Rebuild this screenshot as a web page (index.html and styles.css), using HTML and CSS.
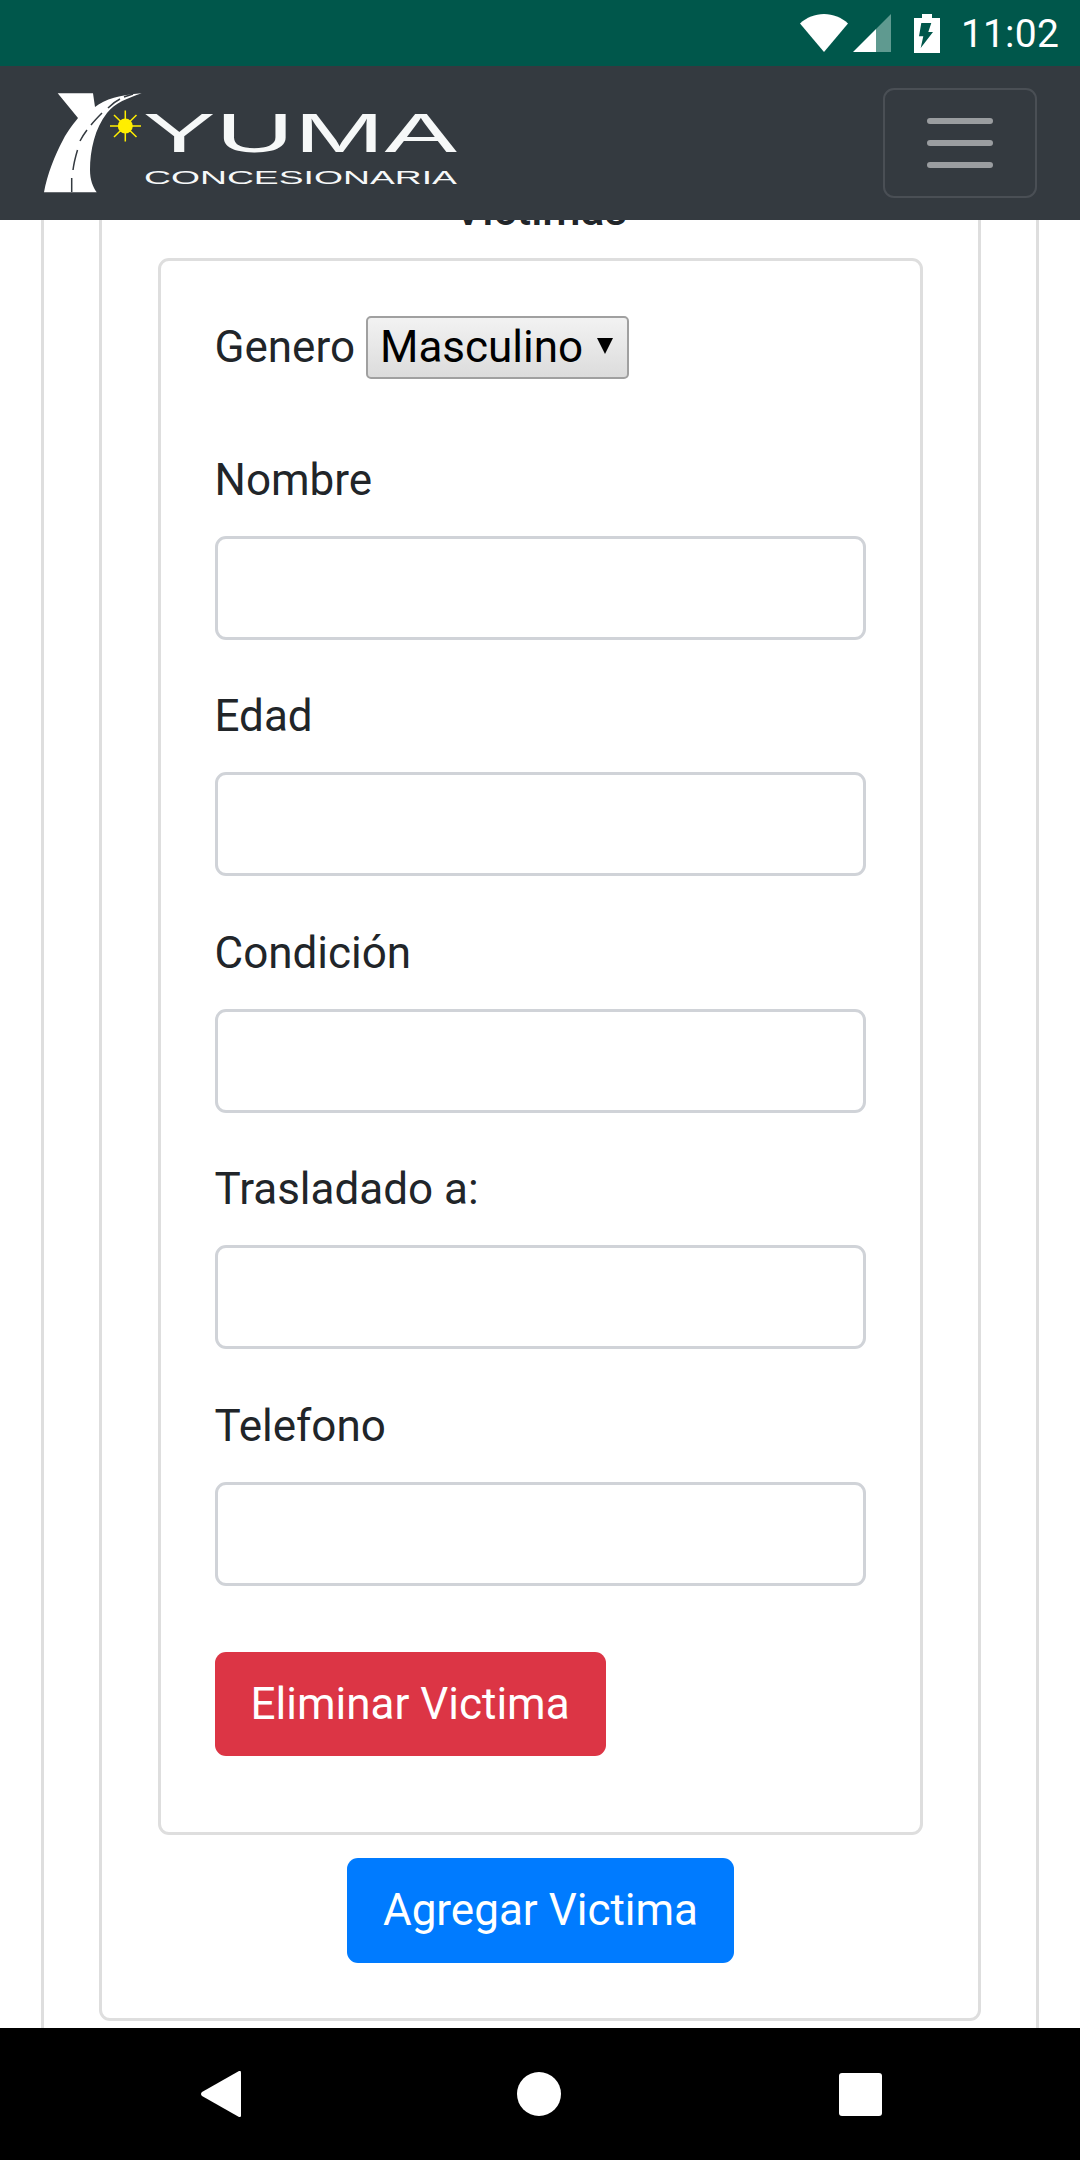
FILE: index.html
```html
<!DOCTYPE html>
<html lang="es">
<head>
<meta charset="utf-8">
<title>Yuma Concesionaria</title>
<link rel="stylesheet" href="styles.css">
</head>
<body>
<div class="screen">
  <div class="statusbar">
    <svg class="ic-wifi" viewBox="0 0 48 38"><path d="M0 9.500C6.500 3.500 15 0 24 0s17.500 3.500 24 9.500L24 38z"/></svg>
    <svg class="ic-signal" viewBox="0 0 38 38"><path class="dim" d="M23 15 38 0v38H23z"/><path d="M0 38 23 15v23z"/></svg>
    <svg class="ic-battery" viewBox="0 0 26 39"><path fill-rule="evenodd" d="M8 0h10v4h8v35H0V4h8zM7.300 9 5 22.300h4.300L6.700 34 19 18h-4.700l3-9z"/></svg>
    <span class="clock">11:02</span>
  </div>
  <header class="navbar">
    <svg class="logo" viewBox="40 88 425 110">
      <path class="road" d="M57.700 93.300H93L95 107C105 99 120 95 141.700 93.300 128 98 115 103 107 113 95 128 90 150 90 170 90 180 93 187 96.700 192.300H44C47 175 55 155 63 140 68 130 75 122 78 118z"/>
      <path class="lane" d="M71.700 192V178M73 170C74 162 76 155 77.500 150M80 141C82 137 84 134 87 130M91 125C95 120 99 116 102 113M108 108C112 104 116 101 120 99M124 97C127 96 130 95 133 94"/>
      <circle class="sun" cx="125.300" cy="126" r="7.500"/>
      <path class="rays" d="M125.300 110.500V141.500M110 126H141M114 115 136.500 137M114 137 136.500 115"/>
      <text class="logo-big" x="143" y="152" textLength="314" lengthAdjust="spacingAndGlyphs">YUMA</text>
      <text class="logo-small" x="144" y="184" textLength="313" lengthAdjust="spacingAndGlyphs">CONCESIONARIA</text>
    </svg>
    <button class="toggler" type="button" aria-label="Menu"><span></span><span></span><span></span></button>
  </header>
  <main class="viewport">
    <div class="panel panel-outer">
      <div class="panel panel-mid">
        <h5 class="title">Victimas</h5>
        <div class="panel panel-inner">
          <div class="gender-row">
            <label class="field-label">Genero</label>
            <span class="select-wrap">
              <select class="select"><option>Masculino</option><option>Femenino</option></select>
            </span>
          </div>
          <div class="group"><label class="field-label">Nombre</label><input class="input" type="text"></div>
          <div class="group"><label class="field-label">Edad</label><input class="input" type="text"></div>
          <div class="group"><label class="field-label">Condición</label><input class="input" type="text"></div>
          <div class="group"><label class="field-label">Trasladado a:</label><input class="input" type="text"></div>
          <div class="group"><label class="field-label">Telefono</label><input class="input" type="text"></div>
          <div class="actions"><button class="btn btn-danger" type="button">Eliminar Victima</button></div>
        </div>
        <div class="add-row"><button class="btn btn-primary" type="button">Agregar Victima</button></div>
      </div>
    </div>
  </main>
  <nav class="navkeys">
    <svg class="key-back" viewBox="0 0 40 46"><path d="M38 0c1.200-.5 2 .300 2 1.500v43c0 1.200-.8 2-2 1.500L1 25c-1.300-1-1.300-3 0-4z"/></svg>
    <svg class="key-home" viewBox="0 0 44 44"><circle cx="22" cy="22" r="22"/></svg>
    <svg class="key-recent" viewBox="0 0 43 43"><rect width="43" height="43" rx="3"/></svg>
  </nav>
</div>
</body>
</html>
```
FILE: styles.css
```css
* { box-sizing: border-box; }
html, body { margin: 0; padding: 0; background: #fff; }
body { font-family: Roboto, "Noto Sans", sans-serif; font-size: 44px; line-height: 66px; color: #212529; }
.screen { width: 1080px; height: 2160px; display: flex; flex-direction: column; overflow: hidden; }

.statusbar { flex: 0 0 66px; background: #00574b; display: flex; align-items: flex-start; justify-content: flex-end; padding: 14px 21px 0 0; color: #fff; }
.statusbar svg { fill: #fff; display: block; }
.ic-wifi { width: 48px; height: 38px; margin-right: 5px; }
.ic-signal { width: 38px; height: 38px; margin-right: 23px; }
.ic-signal .dim { fill: #5f9a90; }
.ic-battery { width: 26px; height: 39px; margin-right: 21px; }
.clock { font-size: 39px; line-height: 40px; letter-spacing: .2px; }

.navbar { flex: 0 0 154px; background: #343a40; display: flex; align-items: flex-start; justify-content: space-between; padding: 22px 43px 0 40px; position: relative; z-index: 2; }
.logo { width: 425px; height: 110px; display: block; }
.road { fill: #fff; }
.lane { fill: none; stroke: #343a40; stroke-width: 1.500; }
.sun { fill: #ffee00; }
.rays { stroke: #ffee00; stroke-width: 1.500; fill: none; }
.logo-big { font-family: "Liberation Sans", sans-serif; font-size: 55px; fill: #f6f8f8; }
.logo-small { font-family: "Liberation Sans", sans-serif; font-size: 18.500px; fill: #f6f8f8; }
.toggler { width: 154px; height: 110px; background: transparent; border: 2.750px solid #4a4f55; border-radius: 11px; display: flex; flex-direction: column; align-items: center; justify-content: center; gap: 16px; padding: 0; }
.toggler span { display: block; width: 66px; height: 6px; border-radius: 3px; background: #9a9da0; }

.viewport { flex: 1 1 auto; min-height: 0; overflow: hidden; background: #fff; }
.panel { border: 3px solid #dedede; border-radius: 11px; background: #fff; }
.panel-outer { margin: -103px 41px 0; padding: 10px 55px 0; height: 2200px; }
.panel-mid { padding: 44px 55px 55px 56px; }
.title { margin: 0 0 14.500px; font-size: 44px; line-height: 66px; font-weight: 500; text-align: center; }
.panel-inner { padding: 55px 54px 76px 53.500px; }

.gender-row { display: flex; align-items: center; gap: 11px; height: 63px; margin-bottom: 68px; }
.select-wrap { display: block; position: relative; }
.select-wrap::after { content: ""; position: absolute; right: 16px; top: 22px; border-left: 8px solid transparent; border-right: 8px solid transparent; border-top: 16px solid #000; pointer-events: none; }
.select { appearance: none; -webkit-appearance: none; display: block; width: 263px; height: 63px; padding: 0 0 0 12px; border: 2.750px solid #a0a0a0; border-radius: 5px; background: linear-gradient(#f2f2f2, #dcdcdc); font: 44px/1 Roboto, sans-serif; color: #000; }

.group { margin-bottom: 43.500px; }
.field-label { display: block; line-height: 66px; margin: 0; }
.group .field-label { margin-bottom: 23px; }
.gender-row .field-label { flex: none; }
.input { display: block; width: 100%; height: 104px; padding: 0 33px; border: 3px solid #d0d3d8; border-radius: 11px; background: #fff; font: 44px Roboto, sans-serif; }

.actions { margin-top: 66px; }
.group:last-of-type { margin-bottom: 0; }
.btn { display: inline-block; height: 104.500px; padding: 0 36px; border: 0; border-radius: 11px; color: #fff; font: 44px/1 Roboto, sans-serif; }
.btn-danger { background: #dc3545; }
.btn-primary { background: #007bff; }
.add-row { display: flex; justify-content: center; margin-top: 23px; }

.navkeys { flex: 0 0 132px; background: #000; display: flex; align-items: center; justify-content: center; gap: 278px; position: relative; z-index: 2; }
.navkeys svg { display: block; fill: #fff; }
.key-back { width: 40px; height: 46px; margin-left: 2px; margin-right: -2px; }
.key-home { width: 44px; height: 44px; }
.key-recent { width: 43px; height: 43px; }
```
